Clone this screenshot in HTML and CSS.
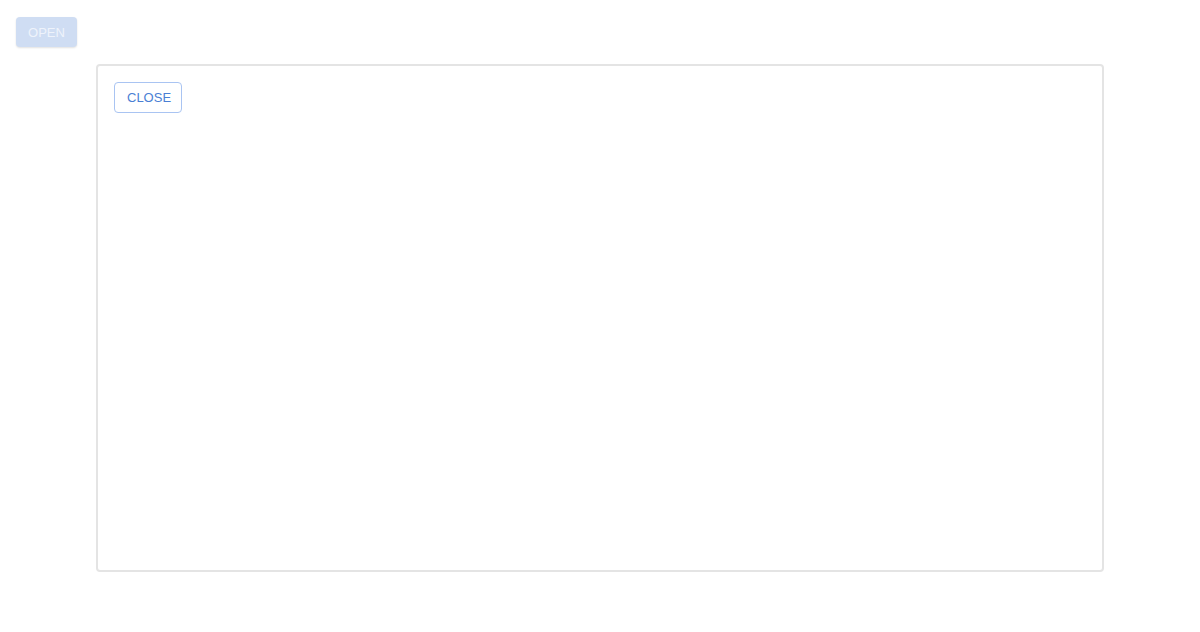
FILE: index.html
```html
<!DOCTYPE html>
<html lang="en">

<head>
    <meta charset="UTF-8">
    <meta name="viewport" content="width=device-width, initial-scale=1.0">
    <title>Drawer</title>
    <link rel="stylesheet" href="styles.css">
</head>

<body>
    <div class="toolbar">
        <button class="open-button" disabled>OPEN</button>
    </div>
    <div class="panel">
        <button class="close-button">CLOSE</button>
    </div>
</body>

</html>
```

FILE: styles.css
```css
body {
    margin: 0;
    padding: 17px 16px 0;
    font-family: "Liberation Sans", Arial, sans-serif;
    background: #ffffff;
}

.toolbar {
    display: flex;
    height: 31px;
}

button {
    font-family: inherit;
    font-size: 13px;
    border-radius: 4px;
    padding: 0 12px;
    height: 30px;
}

.open-button {
    background-color: #cfddf3;
    color: #eef3fb;
    border: none;
    width: 61px;
    box-shadow: 0 1px 2px rgba(0, 0, 0, 0.12);
}

.panel {
    margin: 16px 80px 0;
    height: 508px;
    box-sizing: border-box;
    border: 2px solid #e4e4e4;
    border-radius: 4px;
    padding: 16px;
}

.close-button {
    background: #ffffff;
    color: #4a7fd4;
    border: 1px solid #a9c4f2;
    width: 68px;
    height: 31px;
    cursor: pointer;
}
```
